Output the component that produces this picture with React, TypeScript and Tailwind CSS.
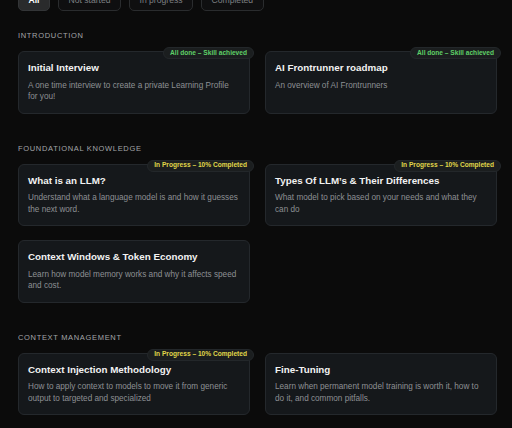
import React from "react";

type Status = "done" | "progress" | "none";
type Item = { title: string; desc: string; status: Status };

const sections: { name: string; items: Item[] }[] = [
  {
    name: "Introduction",
    items: [
      { title: "Initial Interview", desc: "A one time interview to create a private Learning Profile for you!", status: "done" },
      { title: "AI Frontrunner roadmap", desc: "An overview of AI Frontrunners", status: "done" },
    ],
  },
  {
    name: "Foundational Knowledge",
    items: [
      { title: "What is an LLM?", desc: "Understand what a language model is and how it guesses the next word.", status: "progress" },
      { title: "Types Of LLM’s & Their Differences", desc: "What model to pick based on your needs and what they can do", status: "progress" },
      { title: "Context Windows & Token Economy", desc: "Learn how model memory works and why it affects speed and cost.", status: "none" },
    ],
  },
  {
    name: "Context Management",
    items: [
      { title: "Context Injection Methodology", desc: "How to apply context to models to move it from generic output to targeted and specialized", status: "progress" },
      { title: "Fine-Tuning", desc: "Learn when permanent model training is worth it, how to do it, and common pitfalls.", status: "none" },
    ],
  },
];

function Badge({ status }: { status: Status }) {
  if (status === "none") return null;
  const done = status === "done";
  return (
    <div
      className={
        "absolute top-[-5px] right-[-5px] h-[12px] px-[6px] rounded-full bg-[#1b1e1f] border border-[#23272a] flex items-center text-[6.6px] font-bold leading-none whitespace-nowrap " +
        (done ? "text-[#5fd068]" : "text-[#e0d84a]")
      }
    >
      {done ? "All done – Skill achieved" : "In Progress – 10% Completed"}
    </div>
  );
}

function Card({ item }: { item: Item }) {
  return (
    <div className="relative rounded-[6px] bg-[#15181b] border border-[#24282c] pt-[9px] pb-[10px] px-[9px]">
      <Badge status={item.status} />
      <div className="text-[9.8px] leading-[13px] font-bold text-[#f2f2f2]">{item.title}</div>
      <div className="mt-[5.5px] text-[8.2px] leading-[11.5px] text-[#8d9094]">{item.desc}</div>
    </div>
  );
}

export default function App() {
  const tabs = ["All", "Not started", "In progress", "Completed"];
  return (
    <div
      className="w-[512px] h-[428px] overflow-hidden bg-[#0b0b0b] pl-[18px] pr-[15px]"
      style={{ fontFamily: '"Liberation Sans", Arial, sans-serif' }}
    >
      <div className="mt-[-11px] flex gap-[8px]">
        {tabs.map((t, i) => (
          <div
            key={t}
            className={
              "h-[22px] px-[9.5px] flex items-center rounded-[5px] border text-[8.6px] " +
              (i === 0
                ? "bg-[#2a2b2c] border-[#333537] text-white font-bold"
                : "bg-[#0f0f10] border-[#2a2c2e] text-[#7c7f82]")
            }
          >
            {t}
          </div>
        ))}
      </div>
      {sections.map((s, si) => (
        <div key={s.name} className={si === 0 ? "mt-[20px]" : "mt-[30px]"}>
          <div className="text-[7.5px] leading-[9px] uppercase tracking-[0.09em] text-[#a3a5a8]">{s.name}</div>
          <div className="mt-[11px] grid grid-cols-2 gap-x-[15px] gap-y-[14px]">
            {s.items.map((it) => (
              <Card key={it.title} item={it} />
            ))}
          </div>
        </div>
      ))}
    </div>
  );
}
